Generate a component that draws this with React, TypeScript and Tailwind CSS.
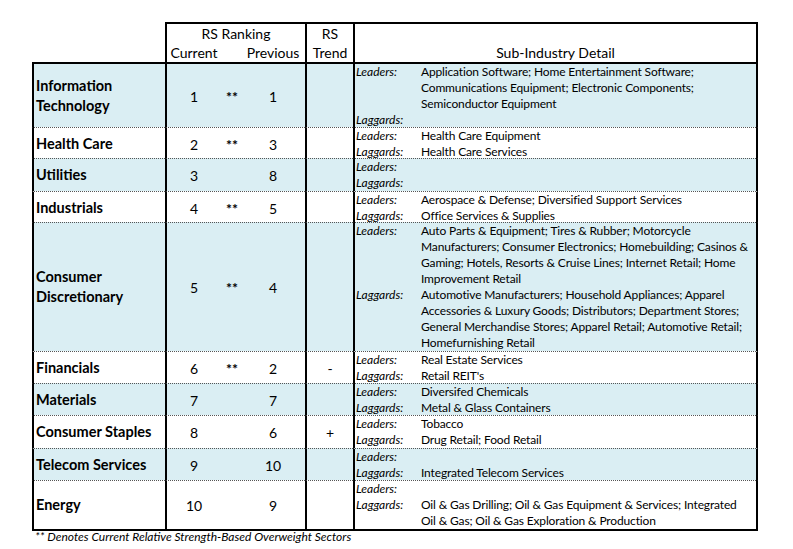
const BLUE = 'bg-[#daeef3]';

const ROWS = [
  {
    name: ['Information', 'Technology'], cur: '1', star: true, prev: '1', trend: '', blue: true, h: 'h-[65px]',
    leaders: ['Application Software; Home Entertainment Software;', 'Communications Equipment; Electronic Components;', 'Semiconductor Equipment'],
    laggards: [''],
  },
  { name: ['Health Care'], cur: '2', star: true, prev: '3', trend: '', blue: false, h: 'h-[31px]', leaders: ['Health Care Equipment'], laggards: ['Health Care Services'] },
  { name: ['Utilities'], cur: '3', star: false, prev: '8', trend: '', blue: true, h: 'h-[33px]', leaders: [''], laggards: [''] },
  { name: ['Industrials'], cur: '4', star: true, prev: '5', trend: '', blue: false, h: 'h-[31px]', leaders: ['Aerospace & Defense; Diversified Support Services'], laggards: ['Office Services & Supplies'] },
  {
    name: ['Consumer', 'Discretionary'], cur: '5', star: true, prev: '4', trend: '', blue: true, h: 'h-[129px]',
    leaders: ['Auto Parts & Equipment; Tires & Rubber; Motorcycle', 'Manufacturers; Consumer Electronics; Homebuilding; Casinos &', 'Gaming; Hotels, Resorts & Cruise Lines; Internet Retail; Home', 'Improvement Retail'],
    laggards: ['Automotive Manufacturers; Household Appliances; Apparel', 'Accessories & Luxury Goods; Distributors; Department Stores;', 'General Merchandise Stores; Apparel Retail; Automotive Retail;', 'Homefurnishing Retail'],
  },
  { name: ['Financials'], cur: '6', star: true, prev: '2', trend: '-', blue: false, h: 'h-[32px]', leaders: ['Real Estate Services'], laggards: ["Retail REIT's"] },
  { name: ['Materials'], cur: '7', star: false, prev: '7', trend: '', blue: true, h: 'h-[32px]', leaders: ['Diversifed Chemicals'], laggards: ['Metal & Glass Containers'] },
  { name: ['Consumer Staples'], cur: '8', star: false, prev: '6', trend: '+', blue: false, h: 'h-[33px]', leaders: ['Tobacco'], laggards: ['Drug Retail; Food Retail'] },
  { name: ['Telecom Services'], cur: '9', star: false, prev: '10', trend: '', blue: true, h: 'h-[32px]', leaders: [''], laggards: ['Integrated Telecom Services'] },
  {
    name: ['Energy'], cur: '10', star: false, prev: '9', trend: '', blue: false, h: 'h-[50px]',
    leaders: [''], laggards: ['Oil & Gas Drilling; Oil & Gas Equipment & Services; Integrated', 'Oil & Gas; Oil & Gas Exploration & Production'],
  },
];

const COLS = 'grid grid-cols-[133px_140px_48px_405px] w-[726px]';

function Detail({ label, lines }) {
  return (
    <>
      {lines.map((l, i) => (
        <div key={i} className="contents">
          <span className="italic tracking-normal">{i === 0 ? label : ''}</span>
          <span className="whitespace-nowrap">{l}</span>
        </div>
      ))}
    </>
  );
}

export default function App() {
  return (
    <div className="w-[793px] h-[549px] bg-white text-black font-['Lato',sans-serif] pt-[22px] pl-[32px]">
      {/* header */}
      <div className={COLS + ' h-[40px]'}>
        <div />
        <div className="border-t-2 border-l-2 border-black text-[14px] leading-[19px]">
          <p className="text-center">RS Ranking</p>
          <div className="grid grid-cols-[54px_22px_60px]">
            <span className="text-center">Current</span>
            <span />
            <span className="text-center">Previous</span>
          </div>
        </div>
        <div className="border-t-2 border-l-2 border-black text-[14px] leading-[19px] text-center">
          <p>RS</p>
          <p>Trend</p>
        </div>
        <div className="border-t-2 border-x-2 border-black text-[14px] leading-[19px] text-center">
          <p>&nbsp;</p>
          <p>Sub-Industry Detail</p>
        </div>
      </div>

      {/* rows */}
      {ROWS.map((r, idx) => {
        const top = idx === 0 ? 'border-t-2 border-t-black' : 'border-t border-t-[#555] [border-top-style:dotted]';
        const bot = idx === ROWS.length - 1 ? ' border-b-2 border-b-black' : '';
        const cell = 'border-l-2 border-l-black ' + top + bot;
        return (
          <div key={idx} className={COLS + ' ' + r.h + ' ' + (r.blue ? BLUE : 'bg-white')}>
            <div className={cell + ' flex flex-col justify-center pl-[2px] font-bold text-[14.5px] leading-[20px]'}>
              {r.name.map(n => <p key={n}>{n}</p>)}
            </div>
            <div className={cell + ' grid grid-cols-[54px_22px_60px] items-center text-[14px]'}>
              <span className="text-center">{r.cur}</span>
              <span className="text-center font-bold">{r.star ? '**' : ''}</span>
              <span className="text-center">{r.prev}</span>
            </div>
            <div className={cell + ' flex items-center justify-center text-[14px]'}>{r.trend}</div>
            <div className={cell + ' border-r-2 border-r-black pl-[1px] grid grid-cols-[65px_1fr] content-start text-[12px] tracking-[-0.15px] leading-[16px]'}>
              <Detail label="Leaders:" lines={r.leaders} />
              <Detail label="Laggards:" lines={r.laggards} />
            </div>
          </div>
        );
      })}

      <p className="italic text-[12px] leading-[14px] pl-[3px]">** Denotes Current Relative Strength-Based Overweight Sectors</p>
    </div>
  );
}
